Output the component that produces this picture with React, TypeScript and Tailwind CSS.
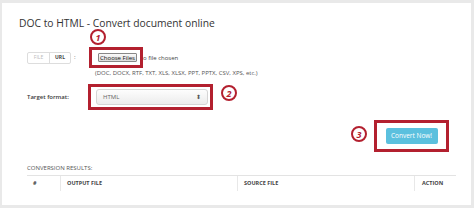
import React from 'react';

const RED = 'border-[#b3202f]';

function Marker({ n, className }: { n: string; className: string }) {
  return (
    <div
      className={`absolute flex h-[16px] w-[16px] items-center justify-center rounded-full border-[2.5px] ${RED} bg-white text-[9px] font-bold italic leading-none text-[#b3202f] ${className}`}
    >
      {n}
    </div>
  );
}

export default function App() {
  return (
    <div className="h-[208px] w-[474px] bg-[#e9e9e9] pb-[3px] pl-[2px] pr-[3px] pt-[3px] font-['Open_Sans',sans-serif]">
      <div className="relative flex h-full flex-col bg-white">
        <h1 className="ml-[17px] mt-[13px] text-[10.3px] leading-[14px] text-[#333]">
          DOC to HTML - Convert document online
        </h1>

        <Marker n="1" className="left-[88px] top-[26px]" />
        <Marker n="2" className="left-[219px] top-[82px]" />
        <Marker n="3" className="left-[349px] top-[123px]" />

        <div className="ml-[25px] mt-[17px] flex items-center">
          <div className="flex w-[62px] items-center">
            <div className="flex h-[12px] overflow-hidden rounded-[2px] border border-[#ddd] text-[5px] leading-none">
              <span className="flex w-[22px] items-center justify-center border-r border-[#ddd] text-[#bbb]">
                FILE
              </span>
              <span className="flex w-[20px] items-center justify-center font-bold text-[#444]">URL</span>
            </div>
            <span className="ml-[3px] text-[6px] text-[#666]">:</span>
          </div>
          <div className={`flex h-[21px] w-[54px] items-center border-[3px] ${RED} pl-[6px]`}>
            <button className="flex h-[9px] w-[39px] items-center justify-center rounded-[1px] border border-[#888] bg-gradient-to-b from-[#fafafa] to-[#dcdcdc] text-[6px] leading-none text-[#111]">
              Choose Files
            </button>
          </div>
          <span className="text-[6px] leading-none text-[#444]">o file chosen</span>
        </div>
        <div className="ml-[93px] mt-[1px] text-[6px] leading-[8px] text-[#555]">
          (DOC, DOCX, RTF, TXT, XLS, XLSX, PPT, PPTX, CSV, XPS, etc.)
        </div>

        <div className="ml-[25px] mt-[7px] flex items-center">
          <span className="w-[61px] text-[6px] font-semibold text-[#3a3a3a]">Target format:</span>
          <div className={`flex h-[26px] w-[125px] items-center border-[3px] ${RED} pl-[5px]`}>
            <div className="flex h-[16px] w-[112px] items-center justify-between rounded-[3px] border border-[#d5d5d5] bg-gradient-to-b from-[#fdfdfd] to-[#ececec] pl-[6px] pr-[6px] text-[6px] leading-none text-[#666]">
              <span>HTML</span>
              <span className="text-[6px] text-[#555]">⬍</span>
            </div>
          </div>
        </div>

        <div className="mr-[22px] mt-[10px] flex justify-end">
          <div className={`flex h-[32px] w-[75px] items-center justify-center border-[3px] ${RED}`}>
            <button className="h-[16px] w-[52px] rounded-[2px] bg-[#5bc0de] text-[6.5px] leading-none text-white">
              Convert Now!
            </button>
          </div>
        </div>

        <div className="ml-[25px] mt-[12px] text-[6px] leading-[8px] text-[#555]">CONVERSION RESULTS:</div>
        <div className="ml-[25px] mr-[15px] mt-[3px] flex border-t border-[#e3e3e3] text-[5.5px] font-bold leading-none text-[#444]">
          <div className="w-[33px] pl-[6px] pt-[5px]">#</div>
          <div className="w-[177px] border-l border-[#e8e8e8] pl-[6px] pt-[5px]">OUTPUT FILE</div>
          <div className="w-[177px] border-l border-[#e8e8e8] pl-[6px] pt-[5px]">SOURCE FILE</div>
          <div className="flex-1 border-l border-[#e8e8e8] pl-[7px] pt-[5px] pb-[4px]">ACTION</div>
        </div>
      </div>
    </div>
  );
}
